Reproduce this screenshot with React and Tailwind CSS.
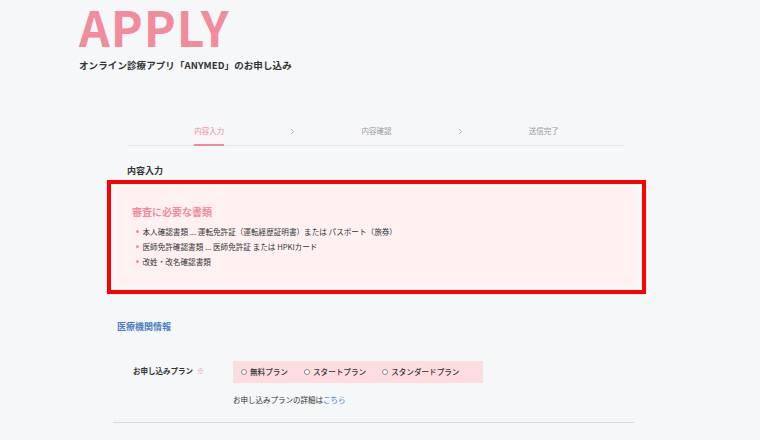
import React from "react";

const JP = { fontFamily: '"Noto Sans CJK JP", "Noto Sans", sans-serif' };

function Chevron() {
  return (
    <svg width="5" height="7" viewBox="0 0 5 7" className="shrink-0">
      <path d="M1 1 L3.5 3.5 L1 6" fill="none" stroke="#aaa" strokeWidth="0.9" />
    </svg>
  );
}

function Radio({ label }) {
  return (
    <label className="flex items-center gap-[3px]">
      <span className="w-[6px] h-[6px] rounded-full border border-[#888] bg-white shrink-0" />
      <span className="text-[7.6px] leading-[12px] font-medium text-[#333]">{label}</span>
    </label>
  );
}

export default function App() {
  return (
    <div className="w-[760px] h-[440px] overflow-hidden bg-[#f6f7f9]" style={JP}>
      <div className="pl-[79px]">
        <h1 className="text-[48px] leading-[52px] font-bold tracking-[0.02em] text-[#f28c9c]">APPLY</h1>
        <p className="mt-[6px] text-[9.5px] leading-[14px] font-bold tracking-[0.01em] text-[#333]">
          オンライン診療アプリ「ANYMED」のお申し込み
        </p>
      </div>

      <div className="ml-[107px] w-[539px]">
        {/* steps */}
        <div className="ml-[21px] w-[497px] mt-[52px] flex items-end border-b border-[#e6e8eb]">
          <div className="flex-1 flex justify-center">
            <span className="text-[7.5px] leading-[14px] pb-[6px] text-[#f0899b] border-b-2 border-[#f0899b] -mb-px">内容入力</span>
          </div>
          <div className="pb-[10px]"><Chevron /></div>
          <div className="flex-1 flex justify-center">
            <span className="text-[7.5px] leading-[14px] pb-[7px] text-[#999]">内容確認</span>
          </div>
          <div className="pb-[10px]"><Chevron /></div>
          <div className="flex-1 flex justify-center">
            <span className="text-[7.5px] leading-[14px] pb-[7px] text-[#999]">送信完了</span>
          </div>
        </div>

        <h2 className="ml-[20px] mt-[18px] text-[9px] leading-[14px] font-bold text-[#333]">内容入力</h2>

        {/* highlighted notice */}
        <div className="mt-[2px] border-4 border-[#ff0000] pt-[3px] pb-[5px] px-[6px]">
          <div className="bg-[#fff0f2] pl-[15px] pt-[18px] pb-[16px]">
            <h3 className="text-[10px] leading-[14px] font-bold text-[#f28c9c]">審査に必要な書類</h3>
            <ul className="mt-[5px] text-[7.6px] leading-[15px] text-[#333]">
              <li className="flex items-center">
                <span className="w-[2.5px] h-[2.5px] rounded-full bg-[#f28c9c] ml-[4px] mr-[4px]" />
                本人確認書類 ... 運転免許証（運転経歴証明書）または パスポート（旅券）
              </li>
              <li className="flex items-center">
                <span className="w-[2.5px] h-[2.5px] rounded-full bg-[#f28c9c] ml-[4px] mr-[4px]" />
                医師免許確認書類 ... 医師免許証 または HPKIカード
              </li>
              <li className="flex items-center">
                <span className="w-[2.5px] h-[2.5px] rounded-full bg-[#f28c9c] ml-[4px] mr-[4px]" />
                改姓・改名確認書類
              </li>
            </ul>
          </div>
        </div>

        <h2 className="ml-[10px] mt-[26px] text-[9px] leading-[14px] font-bold text-[#4a7fc6]">医療機関情報</h2>

        <div className="mt-[27px] flex items-start">
          <div className="ml-[26px] w-[100px] pt-[3px] text-[7.5px] leading-[14px] font-bold text-[#333]">
            お申し込みプラン <span className="text-[#f28c9c] font-normal ml-[2px]">※</span>
          </div>
          <div>
            <div className="w-[250px] h-[22px] bg-[#fddde0] pl-[8px] flex items-center gap-[16px]">
              <Radio label="無料プラン" />
              <Radio label="スタートプラン" />
              <Radio label="スタンダードプラン" />
            </div>
            <p className="mt-[10px] text-[7.5px] leading-[14px] text-[#333]">
              お申し込みプランの詳細は<span className="text-[#4a7fc6]">こちら</span>
            </p>
          </div>
        </div>

        <div className="ml-[6px] w-[521px] mt-[15px] h-px bg-[#d6d9dd] shadow-[0_-2px_2px_rgba(0,0,0,0.03)]" />
      </div>
    </div>
  );
}
